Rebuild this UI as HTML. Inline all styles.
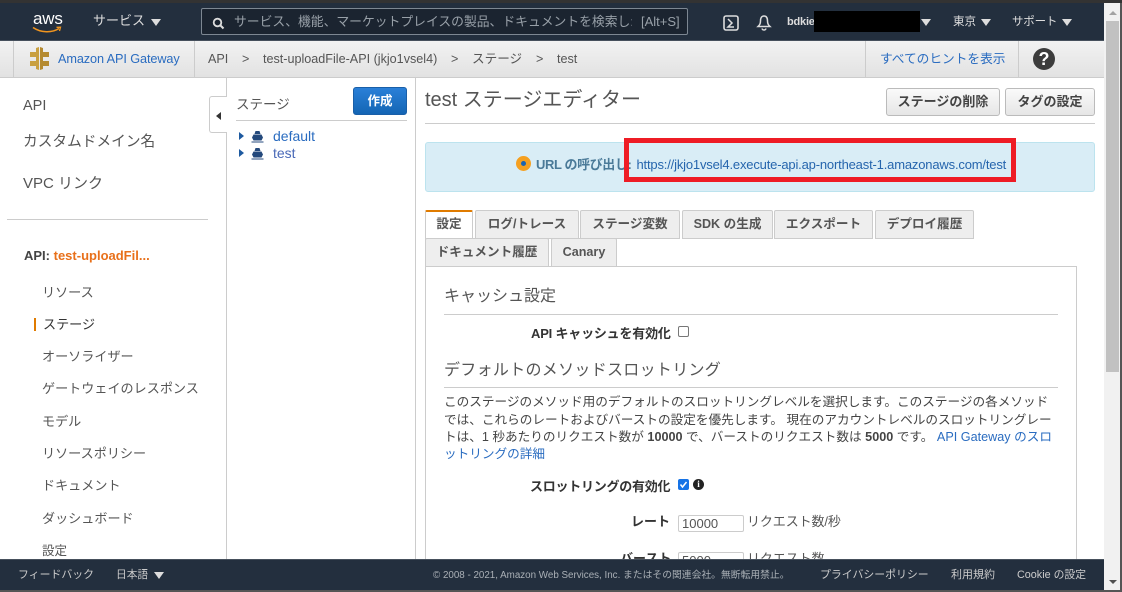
<!DOCTYPE html>
<html lang="ja">
<head>
<meta charset="utf-8">
<style>
html,body{margin:0;padding:0;width:1122px;height:592px;overflow:hidden;background:#fff}
body{position:relative;font-family:"Liberation Sans","Noto Sans CJK JP",sans-serif;font-size:13px;color:#444}
.a{position:absolute;white-space:nowrap}
.b{position:absolute;box-sizing:border-box}
.w{color:#ddd}
.nav{font-size:14.500px;color:#555;line-height:20px}
.sn{font-size:13.100px;color:#555;line-height:20px}
.l{color:#2a6cc0}
.tab{position:absolute;box-sizing:border-box;background:#eee;border:1px solid #ccc;border-bottom:1px solid #ccc;border-radius:2px 2px 0 0;height:29px;line-height:27px;text-align:center;font-weight:bold;font-size:12.600px;color:#555;white-space:nowrap}
.btn{position:absolute;box-sizing:border-box;height:28px;top:88px;border:1px solid #bbb;border-radius:3px;background:linear-gradient(#fafafa,#e6e6e6);font-weight:bold;font-size:13px;color:#444;line-height:26px;text-align:center;white-space:nowrap}
.tri{position:absolute;width:0;height:0;border-left:5px solid transparent;border-right:5px solid transparent;border-top:7px solid #ddd}
.hl{position:absolute;height:1px;background:#ccc}
.p{font-size:12.640px;line-height:18px;color:#444}
</style>
</head>
<body>
<!-- top bar -->
<div class="b" style="left:0;top:0;width:1122px;height:3px;background:#333"></div>
<div class="b" style="left:0;top:3px;width:1104px;height:38px;background:#232f3e;border-bottom:1px solid #46505c"></div>
<div class="a" style="left:33px;top:9px;font-size:17px;line-height:20px;color:#fff;letter-spacing:-.2px">aws</div>
<svg class="a" style="left:32px;top:25px" width="30" height="10" viewBox="0 0 30 10"><path d="M1 2.500C9 8 20 8 27 3.500" fill="none" stroke="#f0951f" stroke-width="1.600"/><path d="M24.500 2.300L28.500 2.200L27.500 6" fill="none" stroke="#f0951f" stroke-width="1.300"/></svg>
<div class="a w" style="left:93px;top:11px;font-size:13px;line-height:20px">サービス</div>
<div class="tri" style="left:151px;top:19px"></div>

<div class="b" style="left:201px;top:8px;width:487px;height:27px;background:#1b2430;border:1px solid #7d8792;border-radius:2px"></div>
<svg class="a" style="left:212px;top:17px" width="13" height="13" viewBox="0 0 13 13"><circle cx="5.500" cy="5.500" r="3.800" fill="none" stroke="#ddd" stroke-width="1.800"/><path d="M8.500 8.500L11.500 11.500" stroke="#ddd" stroke-width="2"/></svg>
<div class="a" style="left:234px;top:12px;font-size:12.800px;line-height:20px;color:#98a0a8;width:398px;overflow:hidden">サービス、機能、マーケットプレイスの製品、ドキュメントを検索し:</div>
<div class="a" style="left:641px;top:12px;font-size:13px;line-height:20px;color:#98a0a8">[Alt+S]</div>

<svg class="a" style="left:723px;top:15px" width="16" height="16" viewBox="0 0 16 16"><rect x="1" y="1" width="14" height="14" rx="2" fill="none" stroke="#ddd" stroke-width="1.600"/><path d="M5 4L9 8L5 12H11" fill="none" stroke="#ddd" stroke-width="1.500"/></svg>
<svg class="a" style="left:756px;top:14px" width="16" height="18" viewBox="0 0 16 18"><path d="M8 2C5 2 4.500 5 4.500 7C4.500 10 3.500 11 2 12.500H14C12.500 11 11.500 10 11.500 7C11.500 5 11 2 8 2Z" fill="none" stroke="#ddd" stroke-width="1.500"/><path d="M6 14.500C6.500 16.500 9.500 16.500 10 14.500" fill="none" stroke="#ddd" stroke-width="1.500"/></svg>
<div class="a" style="left:787px;top:12px;font-size:11px;font-weight:bold;line-height:20px;color:#ddd;letter-spacing:-.2px">bdkie</div>
<div class="b" style="left:814px;top:11px;width:106px;height:21px;background:#000"></div>
<div class="tri" style="left:921px;top:19px"></div>
<div class="a w" style="left:953px;top:12px;font-size:11.500px;line-height:20px">東京</div>
<div class="tri" style="left:981px;top:19px"></div>
<div class="a w" style="left:1012px;top:12px;font-size:11.500px;line-height:20px;letter-spacing:-.2px">サポート</div>
<div class="tri" style="left:1062px;top:19px"></div>

<!-- sub nav -->
<div class="b" style="left:0;top:41px;width:1104px;height:37px;background:linear-gradient(#f2f2f2,#e2e2e2);border-bottom:1px solid #ccc"></div>
<div class="b" style="left:13px;top:41px;width:1px;height:36px;background:#ccc"></div>
<div class="b" style="left:194px;top:41px;width:1px;height:36px;background:#ccc"></div>
<div class="b" style="left:865px;top:41px;width:1px;height:36px;background:#ccc"></div>
<div class="b" style="left:1018px;top:41px;width:1px;height:36px;background:#ccc"></div>
<svg class="a" style="left:29px;top:47px" width="21" height="23" viewBox="0 0 21 23"><path d="M7 1l3-1v23l-3-1v-3H1v-5h6v-4H1V5h6z" fill="#c9a040"/><path d="M14 1l-3-1v23l3-1v-3h6v-5h-6v-4h6V5h-6z" fill="#b58a30"/></svg>
<div class="a l" style="left:58px;top:49px;font-size:12.700px;line-height:20px;letter-spacing:-.1px">Amazon API Gateway</div>
<div class="a" style="left:208px;top:49px;font-size:12.600px;line-height:20px;color:#555">API</div>
<div class="a" style="left:242px;top:49px;font-size:12.600px;line-height:20px;color:#555">&gt;</div>
<div class="a" style="left:263px;top:49px;font-size:12.600px;line-height:20px;color:#555">test-uploadFile-API (jkjo1vsel4)</div>
<div class="a" style="left:451px;top:49px;font-size:12.600px;line-height:20px;color:#555">&gt;</div>
<div class="a" style="left:472px;top:49px;font-size:12.600px;line-height:20px;color:#555">ステージ</div>
<div class="a" style="left:536px;top:49px;font-size:12.600px;line-height:20px;color:#555">&gt;</div>
<div class="a" style="left:557px;top:49px;font-size:12.600px;line-height:20px;color:#555">test</div>
<div class="a l" style="left:880px;top:49px;font-size:12.700px;line-height:20px">すべてのヒントを表示</div>
<div class="b" style="left:1033px;top:48px;width:22px;height:22px;border-radius:50%;background:#3c3c3c;color:#fff;font-weight:bold;font-size:18px;line-height:22px;text-align:center">?</div>

<!-- left nav -->
<div class="a nav" style="left:23px;top:96px">API</div>
<div class="a" style="left:23px;top:132px;font-size:14.700px;line-height:20px;color:#555">カスタムドメイン名</div>
<div class="a nav" style="left:23px;top:174px;font-size:15px">VPC リンク</div>
<div class="hl" style="left:7px;top:219px;width:201px"></div>
<div class="a" style="left:24px;top:246px;font-size:13px;font-weight:bold;line-height:20px;color:#444">API: <span style="color:#e8701a">test-uploadFil...</span></div>
<div class="b" style="left:34px;top:318px;width:2px;height:13px;background:#e07b00"></div>
<div class="a sn" style="left:42px;top:283px">リソース</div>
<div class="a sn" style="left:43px;top:315px;color:#333">ステージ</div>
<div class="a sn" style="left:42px;top:347px">オーソライザー</div>
<div class="a sn" style="left:42px;top:379px">ゲートウェイのレスポンス</div>
<div class="a sn" style="left:42px;top:412px">モデル</div>
<div class="a sn" style="left:42px;top:444px">リソースポリシー</div>
<div class="a sn" style="left:42px;top:476px">ドキュメント</div>
<div class="a sn" style="left:42px;top:509px">ダッシュボード</div>
<div class="a sn" style="left:42px;top:541px;font-size:12.500px">設定</div>

<!-- collapser and stage column -->
<div class="b" style="left:226px;top:78px;width:1px;height:481px;background:#ccc"></div>
<div class="b" style="left:415px;top:78px;width:1px;height:481px;background:#ccc"></div>
<div class="b" style="left:209px;top:96px;width:18px;height:37px;background:#fff;border:1px solid #ccc;border-right:0;border-radius:3px 0 0 3px"></div>
<div class="a" style="left:216px;top:112px;width:0;height:0;border-top:4px solid transparent;border-bottom:4px solid transparent;border-right:5px solid #333"></div>
<div class="a" style="left:236px;top:95px;font-size:13.500px;line-height:20px;color:#555">ステージ</div>
<div class="b" style="left:353px;top:87px;width:54px;height:28px;border-radius:3px;background:linear-gradient(#2a80d8,#1465b4);border:1px solid #1a5fa8;color:#fff;font-weight:bold;font-size:12.500px;line-height:26px;text-align:center">作成</div>
<div class="hl" style="left:236px;top:120px;width:171px"></div>
<div class="a" style="left:239px;top:132px;width:0;height:0;border-top:4px solid transparent;border-bottom:4px solid transparent;border-left:5px solid #1e5aa0"></div>
<div class="a" style="left:239px;top:149px;width:0;height:0;border-top:4px solid transparent;border-bottom:4px solid transparent;border-left:5px solid #1e5aa0"></div>
<svg class="a" style="left:251px;top:130px" width="13" height="13" viewBox="0 0 13 13"><path d="M4.500 1h4l1 3h-6zM2.500 4.500h8l1.500 3-1.500 3h-8L1 7.500zM0.500 11.500h12V12.500H0.500z" fill="#24497c"/></svg>
<svg class="a" style="left:251px;top:147px" width="13" height="13" viewBox="0 0 13 13"><path d="M4.500 1h4l1 3h-6zM2.500 4.500h8l1.500 3-1.500 3h-8L1 7.500zM0.500 11.500h12V12.500H0.500z" fill="#24497c"/></svg>
<div class="a l" style="left:273px;top:127px;font-size:14px;line-height:18px">default</div>
<div class="a l" style="left:273px;top:144px;font-size:14px;line-height:18px;color:#4a6ab8">test</div>

<!-- main header -->
<div class="a" style="left:425px;top:87px;font-size:20px;line-height:26px;color:#555">test ステージエディター</div>
<div class="btn" style="left:886px;width:114px">ステージの削除</div>
<div class="btn" style="left:1005px;width:90px">タグの設定</div>
<div class="hl" style="left:425px;top:123px;width:670px"></div>

<!-- info box -->
<div class="b" style="left:425px;top:142px;width:670px;height:50px;background:#d9edf6;border:1px solid #bce3ee;border-radius:3px"></div>
<div class="b" style="left:516px;top:156px;width:15px;height:15px;border-radius:50%;background:#f5a020"></div>
<div class="b" style="left:521px;top:161px;width:5px;height:5px;border-radius:50%;background:#1c64b0"></div>
<div class="a" style="left:536px;top:156px;font-size:13px;line-height:18px;color:#4a7a98;font-weight:bold;letter-spacing:-.4px">URL の呼び出し:</div>
<div class="a" style="left:636.500px;top:156px;font-size:13px;line-height:18px;color:#2565ad;letter-spacing:-.175px">https://jkjo1vsel4.execute-api.ap-northeast-1.amazonaws.com/test</div>
<div class="b" style="left:624px;top:138px;width:392px;height:44px;border:5px solid #ee1c25"></div>

<!-- tabs -->
<div class="b" style="left:425px;top:266px;width:652px;height:293px;border:1px solid #ccc;border-bottom:0"></div>
<div class="tab" style="left:425px;top:210px;width:48px;height:30px;background:#fff;border-top:2px solid #e07b00;line-height:25px;border-bottom:0">設定</div>
<div class="tab" style="left:475px;top:210px;width:104px">ログ/トレース</div>
<div class="tab" style="left:580px;top:210px;width:100px">ステージ変数</div>
<div class="tab" style="left:682px;top:210px;width:91px">SDK の生成</div>
<div class="tab" style="left:774px;top:210px;width:99px">エクスポート</div>
<div class="tab" style="left:875px;top:210px;width:99px">デプロイ履歴</div>
<div class="tab" style="left:425px;top:238px;width:124px">ドキュメント履歴</div>
<div class="tab" style="left:551px;top:238px;width:66px">Canary</div>

<!-- panel content -->
<div class="a" style="left:444px;top:287px;font-size:16px;line-height:20px;color:#555">キャッシュ設定</div>
<div class="hl" style="left:444px;top:314px;width:614px"></div>
<div class="a" style="left:531px;top:325px;font-size:13px;font-weight:bold;line-height:18px;color:#333;letter-spacing:-.2px">API キャッシュを有効化</div>
<div class="b" style="left:678px;top:326px;width:11px;height:11px;border:1px solid #777;border-radius:2px;background:#fff"></div>
<div class="a" style="left:444px;top:360px;font-size:16px;line-height:22px;color:#555;letter-spacing:.3px">デフォルトのメソッドスロットリング</div>
<div class="hl" style="left:444px;top:387px;width:614px"></div>
<div class="a p" style="left:444px;top:393px">このステージのメソッド用のデフォルトのスロットリングレベルを選択します。このステージの各メソッド</div>
<div class="a p" style="left:444px;top:411px">では、これらのレートおよびバーストの設定を優先します。 現在のアカウントレベルのスロットリングレー</div>
<div class="a p" style="left:444px;top:428px">トは、1 秒あたりのリクエスト数が <b>10000</b> で、バーストのリクエスト数は <b>5000</b> です。 <span class="l">API Gateway のスロ</span></div>
<div class="a p l" style="left:444px;top:445px;color:#2a6cc0">ットリングの詳細</div>
<div class="a" style="left:530px;top:478px;font-size:13px;font-weight:bold;line-height:18px;color:#333;letter-spacing:-.25px">スロットリングの有効化</div>
<div class="b" style="left:678px;top:479px;width:11px;height:11px;border-radius:2px;background:#1673e6"></div>
<svg class="a" style="left:678px;top:479px" width="11" height="11" viewBox="0 0 11 11"><path d="M2.500 5.500L4.500 8L8.500 3" fill="none" stroke="#fff" stroke-width="1.500"/></svg>
<div class="b" style="left:693px;top:479px;width:11px;height:11px;border-radius:50%;background:#222;color:#fff;font:bold 9px/11px 'Liberation Serif',serif;text-align:center">i</div>
<div class="a" style="left:631px;top:513px;font-size:13px;font-weight:bold;line-height:18px;color:#333">レート</div>
<div class="b" style="left:678px;top:515px;width:66px;height:17px;border:1px solid #ccc;border-radius:2px;font-size:13px;line-height:15px;padding-left:3px;color:#555">10000</div>
<div class="a" style="left:747px;top:513px;font-size:13px;line-height:18px;color:#555;letter-spacing:-.1px">リクエスト数/秒</div>
<div class="a" style="left:620px;top:550px;font-size:13px;font-weight:bold;line-height:18px;color:#333">バースト</div>
<div class="b" style="left:678px;top:552px;width:66px;height:17px;border:1px solid #ccc;border-radius:2px;font-size:13px;line-height:15px;padding-left:3px;color:#555">5000</div>
<div class="a" style="left:747px;top:550px;font-size:13px;line-height:18px;color:#555;letter-spacing:-.1px">リクエスト数</div>

<!-- footer -->
<div class="b" style="left:0;top:559px;width:1104px;height:31px;background:#232f3e;border-top:1px solid #46505c"></div>
<div class="b" style="left:0;top:590px;width:1122px;height:2px;background:#555"></div>
<div class="a" style="left:18px;top:566px;font-size:10.900px;line-height:18px;color:#ccc">フィードバック</div>
<div class="a" style="left:116px;top:566px;font-size:10.700px;line-height:18px;color:#ccc">日本語</div>
<div class="tri" style="left:154px;top:572px"></div>
<div class="a" style="left:433px;top:567px;font-size:9.800px;line-height:18px;color:#aab0b6">© 2008 - 2021, Amazon Web Services, Inc. またはその関連会社。無断転用禁止。</div>
<div class="a" style="left:820px;top:566px;font-size:10.900px;line-height:18px;color:#ccc">プライバシーポリシー</div>
<div class="a" style="left:951px;top:566px;font-size:11px;line-height:18px;color:#ccc">利用規約</div>
<div class="a" style="left:1017px;top:566px;font-size:10.800px;line-height:18px;color:#ccc">Cookie の設定</div>

<!-- scrollbar -->
<div class="b" style="left:1104px;top:3px;width:16px;height:587px;background:#f1f1f1"></div>
<div class="b" style="left:1106px;top:21px;width:13px;height:351px;background:#c1c1c1"></div>
<div class="a" style="left:1109px;top:11px;width:0;height:0;border-left:4px solid transparent;border-right:4px solid transparent;border-bottom:4px solid #a3a3a3"></div>
<div class="a" style="left:1109px;top:580px;width:0;height:0;border-left:4px solid transparent;border-right:4px solid transparent;border-top:4px solid #505050"></div>
<div class="b" style="left:1120px;top:3px;width:2px;height:587px;background:#555"></div>
</body>
</html>
